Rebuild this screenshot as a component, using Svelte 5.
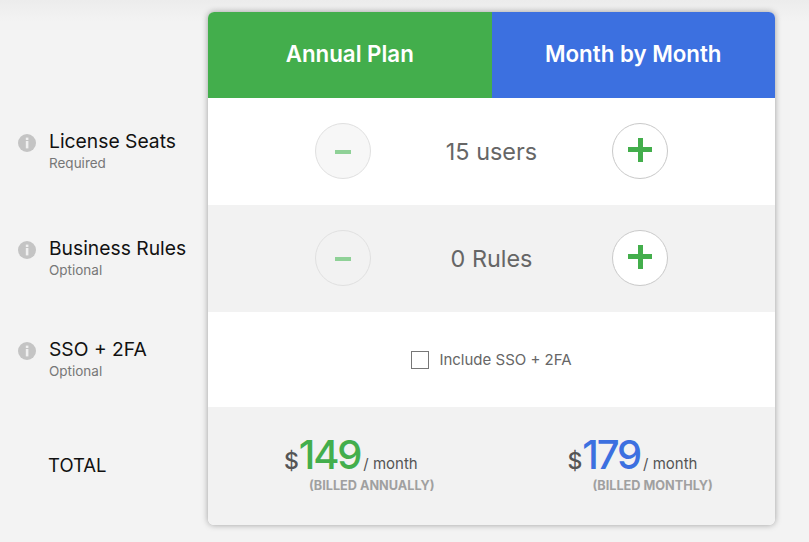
<script>
  let seats = 15;
  let rules = 0;

  const labels = [
    { title: 'License Seats', sub: 'Required', cls: 'h-seats' },
    { title: 'Business Rules', sub: 'Optional', cls: 'h-rules' },
    { title: 'SSO + 2FA', sub: 'Optional', cls: 'h-sso' }
  ];
</script>

<div class="page">
  <div class="labels">
    {#each labels as l}
      <div class="label {l.cls}">
        <span class="info">
          <svg width="18" height="18" viewBox="0 0 18 18">
            <circle cx="9" cy="9" r="9" fill="#c4c4c4" />
            <rect x="7.8" y="3.6" width="2.6" height="2.4" fill="#f0f0f0" />
            <rect x="7.8" y="7" width="2.6" height="7.4" fill="#f0f0f0" />
          </svg>
        </span>
        <div>
          <div class="title">{l.title}</div>
          <div class="sub">{l.sub}</div>
        </div>
      </div>
    {/each}
    <div class="label h-total">
      <div class="title total">TOTAL</div>
    </div>
  </div>

  <div class="card">
    <div class="head">
      <div class="tab green">Annual Plan</div>
      <div class="tab blue">Month by Month</div>
    </div>

    <div class="row h-seats">
      <div class="stepper">
        <button class="round off" aria-label="Remove seat"><span class="minus"></span></button>
        <span class="count">{seats} users</span>
        <button class="round" aria-label="Add seat"><span class="plus"></span></button>
      </div>
    </div>

    <div class="row grey h-rules">
      <div class="stepper">
        <button class="round off" aria-label="Remove rule"><span class="minus"></span></button>
        <span class="count">{rules} Rules</span>
        <button class="round" aria-label="Add rule"><span class="plus"></span></button>
      </div>
    </div>

    <div class="row h-sso">
      <label class="check">
        <input type="checkbox" />
        <span>Include SSO + 2FA</span>
      </label>
    </div>

    <div class="row grey h-total prices">
      <div class="price">
        <div class="amount">
          <span class="dollar">$</span><span class="big g">149</span><span class="per">/ month</span>
        </div>
        <div class="billed">(BILLED ANNUALLY)</div>
      </div>
      <div class="price">
        <div class="amount">
          <span class="dollar">$</span><span class="big b">179</span><span class="per">/ month</span>
        </div>
        <div class="billed">(BILLED MONTHLY)</div>
      </div>
    </div>
  </div>
</div>

<style>
  :global(body) {
    margin: 0;
    background: #f3f3f3;
  }

  .page {
    display: flex;
    height: 542px;
    box-sizing: border-box;
    padding-top: 12px;
    overflow: hidden;
    font-family: "Inter", "Liberation Sans", sans-serif;
    background: linear-gradient(#ececec 0, #f3f3f3 22px);
  }

  .labels {
    width: 208px;
    padding-top: 86px;
  }

  .label {
    display: flex;
    align-items: center;
    padding-left: 18px;
    box-sizing: border-box;
  }

  .info {
    width: 31px;
    height: 18px;
    margin-top: -17px;
  }

  .title {
    font-size: 19.3px;
    line-height: 22px;
    color: #111;
    margin-top: -3px;
  }

  .sub {
    font-size: 13.5px;
    line-height: 16px;
    color: #777;
    margin-top: 3px;
  }

  .total {
    margin: -2px 0 0 30px;
    font-size: 18.5px;
  }

  .h-seats { height: 107px; }
  .h-rules { height: 107px; }
  .h-sso { height: 95px; }
  .h-total { height: 118px; }

  .card {
    width: 567px;
    height: 513px;
    border-radius: 6px;
    overflow: hidden;
    background: #fff;
    box-shadow: 0 0 6px rgba(0, 0, 0, 0.35);
  }

  .head {
    display: flex;
    height: 86px;
  }

  .tab {
    width: 50%;
    display: flex;
    align-items: center;
    justify-content: center;
    padding-bottom: 3px;
    box-sizing: border-box;
    color: #fff;
    font-size: 22.3px;
    font-weight: 600;
  }

  .green { background: #43ae4c; }
  .blue { background: #3c70e0; }

  .row {
    display: flex;
    align-items: center;
    justify-content: center;
  }

  .grey { background: #f2f2f2; }

  .stepper {
    width: 353px;
    margin-top: -1px;
    display: flex;
    align-items: center;
    justify-content: space-between;
  }

  .round {
    width: 56px;
    height: 56px;
    padding: 0;
    border: 1px solid #c9c9c9;
    border-radius: 50%;
    background: #fff;
    display: flex;
    align-items: center;
    justify-content: center;
  }

  .round.off {
    background: #f7f7f7;
    border-color: #e0e0e0;
  }

  .grey .round.off { background: #f2f2f2; }

  .minus {
    width: 16px;
    height: 4px;
    margin-top: 2px;
    background: #8fd197;
  }

  .plus {
    width: 24px;
    height: 24px;
    margin-bottom: 3px;
    background:
      linear-gradient(#43ae4c, #43ae4c) center / 24px 5px no-repeat,
      linear-gradient(#43ae4c, #43ae4c) center / 5px 24px no-repeat;
  }

  .count {
    font-size: 23.4px;
    color: #666;
  }

  .check {
    display: flex;
    align-items: center;
    gap: 10px;
    font-size: 15px;
    color: #666;
  }

  .check input {
    appearance: none;
    width: 18px;
    height: 18px;
    margin: 0;
    border: 1px solid #777;
    background: #fff;
  }

  .prices {
    justify-content: flex-start;
    align-items: flex-start;
  }

  .price {
    width: 50%;
    padding: 27px 0 0 76px;
    box-sizing: border-box;
  }

  .amount {
    display: flex;
    align-items: baseline;
    height: 42px;
  }

  .dollar {
    font-size: 23px;
    font-weight: 500;
    color: #555;
  }

  .big {
    font-size: 40px;
    line-height: 42px;
    font-weight: 500;
    letter-spacing: -2.2px;
  }

  .g { color: #43ae4c; }
  .b { color: #3c70e0; }

  .per {
    font-size: 15px;
    color: #555;
    margin-left: 3px;
  }

  .billed {
    margin: 2px 0 0 25px;
    font-size: 12.7px;
    font-weight: 700;
    color: #a0a0a0;
  }
</style>
